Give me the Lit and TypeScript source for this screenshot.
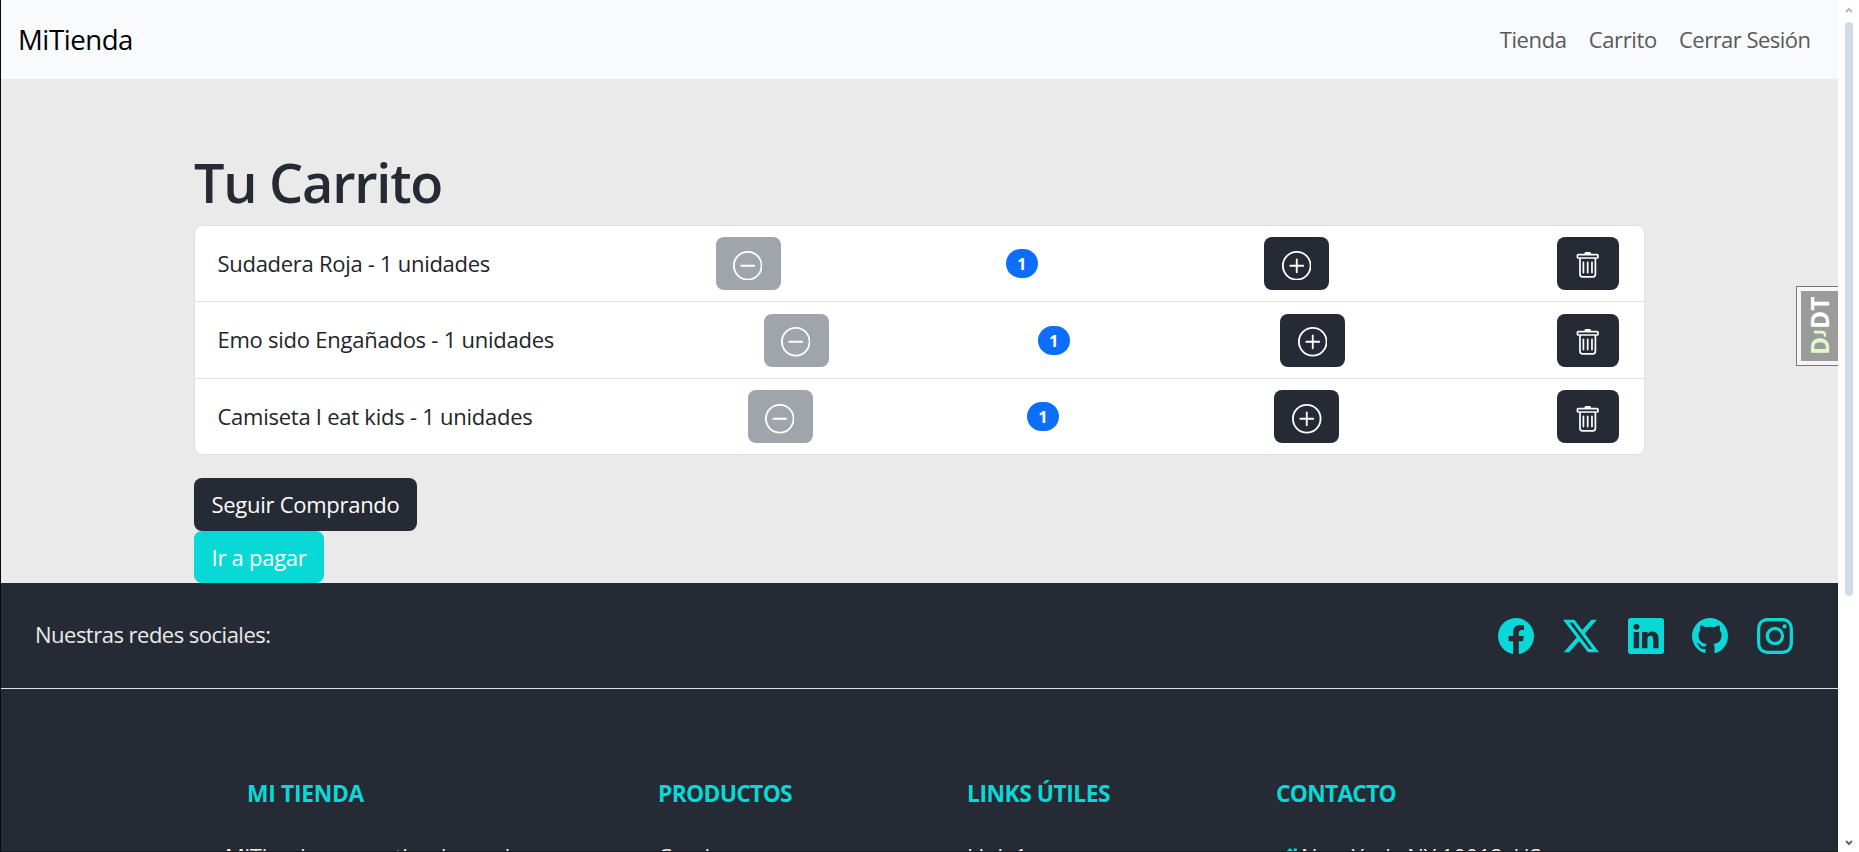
import { LitElement, html, css, svg } from "lit";
import { customElement, property } from "lit/decorators.js";

/* Inline text whose tracking is tuned so that it fills a given advance width. */
@customElement("fit-text")
class FitText extends LitElement {
  @property({ type: Number }) w = 0;
  static styles = css`
    :host { display: inline-block; white-space: nowrap; }
    .run { display: inline-block; white-space: pre; }
  `;
  render() {
    return html`<span class="run"><slot></slot></span>`;
  }
  firstUpdated() {
    const run = this.renderRoot.querySelector(".run") as HTMLElement;
    const n = (this.textContent || "").length;
    const natural = run.getBoundingClientRect().width;
    if (n > 0 && natural > 0) {
      run.style.letterSpacing = `${(this.w - natural) / n}px`;
      this.style.width = `${this.w}px`;
    }
  }
}

const minus = svg`<path d="M8 15A7 7 0 1 1 8 1a7 7 0 0 1 0 14m0 1A8 8 0 1 0 8 0a8 8 0 0 0 0 16"/><path d="M4 8a.5.5 0 0 1 .5-.5h7a.5.5 0 0 1 0 1h-7A.5.5 0 0 1 4 8"/>`;
const plus = svg`<path d="M8 15A7 7 0 1 1 8 1a7 7 0 0 1 0 14m0 1A8 8 0 1 0 8 0a8 8 0 0 0 0 16"/><path d="M8 4a.5.5 0 0 1 .5.5v3h3a.5.5 0 0 1 0 1h-3v3a.5.5 0 0 1-1 0v-3h-3a.5.5 0 0 1 0-1h3v-3A.5.5 0 0 1 8 4"/>`;
const trash = svg`<path d="M5.5 5.5A.5.5 0 0 1 6 6v6a.5.5 0 0 1-1 0V6a.5.5 0 0 1 .5-.5m2.5 0a.5.5 0 0 1 .5.5v6a.5.5 0 0 1-1 0V6a.5.5 0 0 1 .5-.5m3 .5a.5.5 0 0 0-1 0v6a.5.5 0 0 0 1 0z"/><path d="M14.5 3a1 1 0 0 1-1 1H13v9a2 2 0 0 1-2 2H5a2 2 0 0 1-2-2V4h-.5a1 1 0 0 1-1-1V2a1 1 0 0 1 1-1H6a1 1 0 0 1 1-1h2a1 1 0 0 1 1 1h3.5a1 1 0 0 1 1 1zM4.118 4 4 4.059V13a1 1 0 0 0 1 1h6a1 1 0 0 0 1-1V4.059L11.882 4zM2.5 3h11V2h-11z"/>`;

const socials = [
  svg`<path d="M16 8.049c0-4.446-3.582-8.05-8-8.05C3.58 0-.002 3.603-.002 8.05c0 4.017 2.926 7.347 6.75 7.951v-5.625h-2.03V8.05H6.75V6.275c0-2.017 1.195-3.131 3.022-3.131.876 0 1.791.157 1.791.157v1.98h-1.009c-.993 0-1.303.621-1.303 1.258v1.51h2.218l-.354 2.326H9.25V16c3.824-.604 6.75-3.934 6.75-7.951"/>`,
  svg`<path d="M12.6.75h2.454l-5.36 6.142L16 15.25h-4.937l-3.867-5.07-4.425 5.07H.316l5.733-6.57L0 .75h5.063l3.495 4.633L12.601.75Zm-.86 13.028h1.36L4.323 2.145H2.865z"/>`,
  svg`<path d="M0 1.146C0 .513.526 0 1.175 0h13.65C15.474 0 16 .513 16 1.146v13.708c0 .633-.526 1.146-1.175 1.146H1.175C.526 16 0 15.487 0 14.854zm4.943 12.248V6.169H2.542v7.225zm-1.2-8.212c.837 0 1.358-.554 1.358-1.248-.015-.709-.52-1.248-1.342-1.248S2.4 3.226 2.4 3.934c0 .694.521 1.248 1.327 1.248zm4.908 8.212V9.359c0-.216.016-.432.08-.586.173-.431.568-.878 1.232-.878.869 0 1.216.662 1.216 1.634v3.865h2.401V9.25c0-2.22-1.184-3.252-2.764-3.252-1.274 0-1.845.7-2.165 1.193v.025h-.016l.016-.025V6.169h-2.4c.03.678 0 7.225 0 7.225z"/>`,
  svg`<path d="M8 0C3.58 0 0 3.58 0 8c0 3.54 2.29 6.53 5.47 7.59.4.07.55-.17.55-.38 0-.19-.01-.82-.01-1.49-2.01.37-2.53-.49-2.69-.94-.09-.23-.48-.94-.82-1.13-.28-.15-.68-.52-.01-.53.63-.01 1.08.58 1.23.82.72 1.21 1.87.87 2.33.66.07-.52.28-.87.51-1.07-1.78-.2-3.64-.89-3.64-3.95 0-.87.31-1.59.82-2.15-.08-.2-.36-1.02.08-2.12 0 0 .67-.21 2.2.82.64-.18 1.32-.27 2-.27s1.36.09 2 .27c1.53-1.04 2.2-.82 2.2-.82.44 1.1.16 1.92.08 2.12.51.56.82 1.27.82 2.15 0 3.07-1.87 3.75-3.65 3.95.29.25.54.73.54 1.48 0 1.07-.01 1.93-.01 2.2 0 .21.15.46.55.38A8.01 8.01 0 0 0 16 8c0-4.42-3.58-8-8-8"/>`,
  svg`<path d="M8 0C5.829 0 5.556.01 4.703.048 3.85.088 3.269.222 2.76.42a3.9 3.9 0 0 0-1.417.923A3.9 3.9 0 0 0 .42 2.76C.222 3.268.087 3.85.048 4.7.01 5.555 0 5.827 0 8.001c0 2.172.01 2.444.048 3.297.04.852.174 1.433.372 1.942.205.526.478.972.923 1.417.444.445.89.719 1.416.923.51.198 1.09.333 1.942.372C5.555 15.99 5.827 16 8 16s2.444-.01 3.298-.048c.851-.04 1.434-.174 1.943-.372a3.9 3.9 0 0 0 1.416-.923c.445-.445.718-.891.923-1.417.197-.509.332-1.09.372-1.942C15.99 10.445 16 10.173 16 8s-.01-2.445-.048-3.299c-.04-.851-.175-1.433-.372-1.941a3.9 3.9 0 0 0-.923-1.417A3.9 3.9 0 0 0 13.24.42c-.51-.198-1.092-.333-1.943-.372C10.443.01 10.172 0 7.998 0zm-.717 1.442h.718c2.136 0 2.389.007 3.232.046.78.035 1.204.166 1.486.275.373.145.64.319.92.599s.453.546.598.92c.11.281.24.705.275 1.485.039.843.047 1.096.047 3.231s-.008 2.389-.047 3.232c-.035.78-.166 1.203-.275 1.485a2.5 2.5 0 0 1-.599.919c-.28.28-.546.453-.92.598-.28.11-.704.24-1.485.276-.843.038-1.096.047-3.232.047s-2.39-.009-3.233-.047c-.78-.036-1.203-.166-1.485-.276a2.5 2.5 0 0 1-.92-.598 2.5 2.5 0 0 1-.6-.92c-.109-.281-.24-.705-.275-1.485-.038-.843-.046-1.096-.046-3.233s.008-2.388.046-3.231c.036-.78.166-1.204.276-1.486.145-.373.319-.64.599-.92s.546-.453.92-.598c.282-.11.705-.24 1.485-.276.738-.034 1.024-.044 2.515-.045zm4.988 1.328a.96.96 0 1 0 0 1.92.96.96 0 0 0 0-1.92m-4.27 1.122a4.109 4.109 0 1 0 0 8.217 4.109 4.109 0 0 0 0-8.217m0 1.441a2.667 2.667 0 1 1 0 5.334 2.667 2.667 0 0 1 0-5.334"/>`,
];

const items = [
  { label: "Sudadera Roja - 1 unidades", w: 272.5 },
  { label: "Emo sido Engañados - 1 unidades", w: 336.5 },
  { label: "Camiseta I eat kids - 1 unidades", w: 315 },
];

@customElement("app-root")
class AppRoot extends LitElement {
  static styles = css`
    :host {
      display: block; height: 852px; overflow: hidden; background: #fff;
      font-family: "Open Sans", "Noto Sans", sans-serif; font-size: 22px; line-height: 33.3px; color: #212529;
    }
    * { box-sizing: border-box; }
    .window { display: grid; grid-template-columns: 1837px 21px; height: 852px; border-left: 1px solid #0a0a0a; }
    .page { background: #eaeaea; height: 852px; overflow: hidden; position: relative; border-bottom: 1px solid #1a1c22; }
    .nav { height: 79px; background: #f8fafc; display: flex; align-items: center; justify-content: space-between; padding: 0 27.5px 0 17px; }
    .brand { font-size: 27.6px; line-height: 40px; color: #000; font-weight: 400; margin-top: -2px; }
    .links { display: flex; gap: 22.2px; color: #59595b; }
    .main { height: 504px; padding: 70px 193px 0 193px; }
    h1 { margin: 0; font-size: 54px; line-height: 66px; height: 76px; font-weight: 600; color: #252a34; }
    .list { border: 1px solid #dee2e6; border-radius: 8px; background: #fff; width: 1451px; height: 230px; }
    .row { height: 76.4px; display: flex; justify-content: space-between; align-items: center; padding: 0 25px 0 22.5px; border-bottom: 1px solid #dee2e6; }
    .row:last-child { border-bottom: 0; }
    .btn { background: #252a34; color: #fff; border-radius: 8px; height: 53px; width: 65px; display: flex; align-items: center; justify-content: center; }
    .btn svg { width: 29.5px; height: 29.5px; fill: #fff; margin-top: 4px; }
    .btn.add { margin-right: 2.5px; }
    .btn.off { background: #a0a5ab; }
    .btn.off svg { margin-right: 1.5px; }
    .btn.del { width: 62px; }
    .btn.del svg { width: 27.4px; height: 27.4px; margin-top: 5px; }
    .badge { background: #0d6efd; color: #fff; font-weight: 700; font-size: 16.5px; line-height: 29px; width: 31.5px; height: 29px; border-radius: 15px; text-align: center; margin: 0 .5px 0 -.5px; }
    .actions { margin-top: 23px; display: flex; flex-direction: column; align-items: flex-start; }
    .wide { color: #fff; background: #252a34; border-radius: 8px; padding: 9.5px 17.5px 0; height: 52.5px; }
    .pay { background: #08d9d6; padding-top: 10px; }
    .footer { background: #252a34; height: 269px; color: #eaeaea; }
    .social { height: 106px; border-bottom: 1px solid #dee2e6; display: flex; justify-content: space-between; padding: 35px 45px 0 34px; }
    .icons { display: flex; gap: 28.75px; }
    .icons svg { width: 36px; height: 36px; fill: #08d9d6; display: block; }
    .cols { display: grid; grid-template-columns: 433px 309px 309px 400px; padding: 87.5px 0 0 224px; }
    h6 { margin: 0; font-size: 22.8px; line-height: 33.3px; height: 63.5px; font-weight: 700; color: #08d9d6; }
    .indent { padding-left: 22px; }
    .addr { display: flex; padding-left: 4px; gap: 1px; white-space: nowrap; }
    .addr svg { width: 20px; height: 20px; fill: #08d9d6; margin-top: 7px; }
    .djdt { position: absolute; right: 0; top: 286px; width: 42px; height: 80px; border: 1px solid #777; border-right: 0; background: #f6f6f6; padding: 4px 0 4px 4px; }
    .djin { background: #9b9b9b; width: 37px; height: 70px; display: flex; align-items: center; justify-content: center; writing-mode: vertical-rl; transform: rotate(180deg); font-weight: 700; font-size: 24.5px; line-height: 37px; color: #fff; }
    .djin .g { color: #e2f8cd; }
    .djin .j { font-family: Lato, sans-serif; font-weight: 900; font-size: 17px; }
    .bar { display: flex; flex-direction: column; align-items: center; padding: 7px 0 6px; background: #fff; height: 852px; }
    .bar svg { width: 8px; height: 6px; fill: none; stroke: #bbb; stroke-width: 2; }
    .bar .down { stroke: #666; margin-top: auto; }
    .thumb { width: 8px; height: 574px; border-radius: 4px; background: #d0dbe4; margin-top: 9px; }
  `;
  icon(i: unknown) {
    return html`<svg viewBox="0 0 16 16">${i}</svg>`;
  }
  render() {
    return html`<div class="window">
      <div class="page">
        <nav class="nav">
          <fit-text class="brand" w="115">MiTienda</fit-text>
          <div class="links">
            <fit-text w="67">Tienda</fit-text>
            <fit-text w="68">Carrito</fit-text>
            <fit-text w="131.500">Cerrar Sesión</fit-text>
          </div>
        </nav>
        <main class="main">
          <h1><fit-text w="248">Tu Carrito</fit-text></h1>
          <div class="list">
            ${items.map((it) => html`<div class="row">
              <fit-text w=${it.w}>${it.label}</fit-text>
              <div class="btn off">${this.icon(minus)}</div>
              <div class="badge">1</div>
              <div class="btn add">${this.icon(plus)}</div>
              <div class="btn del">${this.icon(trash)}</div>
            </div>`)}
          </div>
          <div class="actions">
            <div class="wide"><fit-text w="188">Seguir Comprando</fit-text></div>
            <div class="wide pay"><fit-text w="95">Ir a pagar</fit-text></div>
          </div>
        </main>
        <footer class="footer">
          <div class="social">
            <fit-text w="235.500">Nuestras redes sociales:</fit-text>
            <div class="icons">${socials.map((s) => this.icon(s))}</div>
          </div>
          <div class="cols">
            <div><h6 class="indent"><fit-text w="117">MI TIENDA</fit-text></h6><fit-text w="331">MiTienda es una tienda moderna</fit-text></div>
            <div><h6><fit-text w="134">PRODUCTOS</fit-text></h6>Camisas</div>
            <div><h6><fit-text w="143">LINKS ÚTILES</fit-text></h6>Link 1</div>
            <div><h6><fit-text w="120">CONTACTO</fit-text></h6>
              <div class="addr"><svg viewBox="0 0 16 16"><path d="M8 .8 0 8.500 1 9.500 2.500 8.200V15h11V8.200L15 9.500 16 8.500 13.500 6.100V1.200h-2.500v2.500z"/></svg><fit-text w="240">New York, NY 10012, US</fit-text></div>
            </div>
          </div>
        </footer>
        <div class="djdt"><div class="djin"><span class="g">D</span><span class="g j">J</span><span>DT</span></div></div>
      </div>
      <div class="bar">
        <svg viewBox="0 0 8 6"><path d="M1 5 4 2 7 5"/></svg>
        <div class="thumb"></div>
        <svg class="down" viewBox="0 0 8 6"><path d="M1 1 4 4 7 1"/></svg>
      </div>
    </div>`;
  }
}
